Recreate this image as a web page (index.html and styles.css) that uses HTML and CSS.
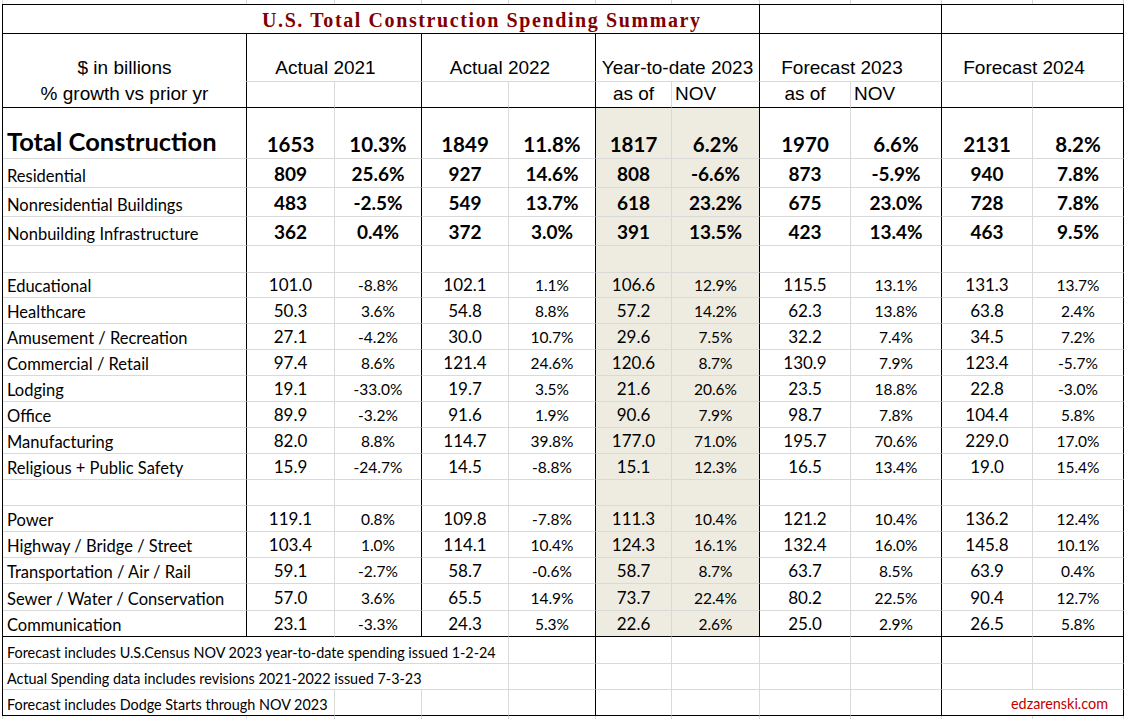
FILE: index.html
```html
<!DOCTYPE html>
<html lang="en">
<head>
<meta charset="utf-8">
<title>U.S. Total Construction Spending Summary</title>
<link rel="stylesheet" href="styles.css">
</head>
<body>
<div class="strip">
  <div></div><div></div><div></div><div></div><div></div><div></div><div></div><div></div><div></div><div></div><div></div>
</div>
<div class="sheet">
  <!-- title row -->
  <div class="c kr kb title s7">U.S. Total Construction Spending Summary</div>
  <div class="c kr kb s2"></div>
  <div class="c kr kb s2"></div>

  <!-- header row 1 -->
  <div class="c kr nb hd">$ in billions</div>
  <div class="c kr hd s2 off">Actual 2021</div>
  <div class="c kr hd s2 off">Actual 2022</div>
  <div class="c kr hd s2">Year-to-date 2023</div>
  <div class="c kr hd s2 off">Forecast 2023</div>
  <div class="c kr hd s2 off">Forecast 2024</div>

  <!-- header row 2 -->
  <div class="c kr kb hd">% growth vs prior yr</div>
  <div class="c kb"></div><div class="c kr kb"></div>
  <div class="c kb"></div><div class="c kr kb"></div>
  <div class="c kb hd">as of</div><div class="c kr kb hd left">NOV</div>
  <div class="c kb hd">as of</div><div class="c kr kb hd left">NOV</div>
  <div class="c kb"></div><div class="c kr kb"></div>

  <!-- Total -->
  <div class="c kr lab tl">Total Construction</div>
  <div class="c tn">1653</div><div class="c kr tn">10.3%</div>
  <div class="c tn">1849</div><div class="c kr tn">11.8%</div>
  <div class="c y tn">1817</div><div class="c kr y tn">6.2%</div>
  <div class="c tn">1970</div><div class="c kr tn">6.6%</div>
  <div class="c tn">2131</div><div class="c kr tn">8.2%</div>

  <div class="c kr lab">Residential</div>
  <div class="c bn">809</div><div class="c kr bn">25.6%</div>
  <div class="c bn">927</div><div class="c kr bn">14.6%</div>
  <div class="c y bn">808</div><div class="c kr y bn">-6.6%</div>
  <div class="c bn">873</div><div class="c kr bn">-5.9%</div>
  <div class="c bn">940</div><div class="c kr bn">7.8%</div>

  <div class="c kr lab">Nonresidential Buildings</div>
  <div class="c bn">483</div><div class="c kr bn">-2.5%</div>
  <div class="c bn">549</div><div class="c kr bn">13.7%</div>
  <div class="c y bn">618</div><div class="c kr y bn">23.2%</div>
  <div class="c bn">675</div><div class="c kr bn">23.0%</div>
  <div class="c bn">728</div><div class="c kr bn">7.8%</div>

  <div class="c kr lab">Nonbuilding Infrastructure</div>
  <div class="c bn">362</div><div class="c kr bn">0.4%</div>
  <div class="c bn">372</div><div class="c kr bn">3.0%</div>
  <div class="c y bn">391</div><div class="c kr y bn">13.5%</div>
  <div class="c bn">423</div><div class="c kr bn">13.4%</div>
  <div class="c bn">463</div><div class="c kr bn">9.5%</div>

  <div class="c kr"></div>
  <div class="c"></div><div class="c kr"></div>
  <div class="c"></div><div class="c kr"></div>
  <div class="c y"></div><div class="c kr y"></div>
  <div class="c"></div><div class="c kr"></div>
  <div class="c"></div><div class="c kr"></div>

  <div class="c kr lab">Educational</div>
  <div class="c n">101.0</div><div class="c kr p">-8.8%</div>
  <div class="c n">102.1</div><div class="c kr p">1.1%</div>
  <div class="c y n">106.6</div><div class="c kr y p">12.9%</div>
  <div class="c n">115.5</div><div class="c kr p">13.1%</div>
  <div class="c n">131.3</div><div class="c kr p">13.7%</div>

  <div class="c kr lab">Healthcare</div>
  <div class="c n">50.3</div><div class="c kr p">3.6%</div>
  <div class="c n">54.8</div><div class="c kr p">8.8%</div>
  <div class="c y n">57.2</div><div class="c kr y p">14.2%</div>
  <div class="c n">62.3</div><div class="c kr p">13.8%</div>
  <div class="c n">63.8</div><div class="c kr p">2.4%</div>

  <div class="c kr lab">Amusement / Recreation</div>
  <div class="c n">27.1</div><div class="c kr p">-4.2%</div>
  <div class="c n">30.0</div><div class="c kr p">10.7%</div>
  <div class="c y n">29.6</div><div class="c kr y p">7.5%</div>
  <div class="c n">32.2</div><div class="c kr p">7.4%</div>
  <div class="c n">34.5</div><div class="c kr p">7.2%</div>

  <div class="c kr lab">Commercial / Retail</div>
  <div class="c n">97.4</div><div class="c kr p">8.6%</div>
  <div class="c n">121.4</div><div class="c kr p">24.6%</div>
  <div class="c y n">120.6</div><div class="c kr y p">8.7%</div>
  <div class="c n">130.9</div><div class="c kr p">7.9%</div>
  <div class="c n">123.4</div><div class="c kr p">-5.7%</div>

  <div class="c kr lab">Lodging</div>
  <div class="c n">19.1</div><div class="c kr p">-33.0%</div>
  <div class="c n">19.7</div><div class="c kr p">3.5%</div>
  <div class="c y n">21.6</div><div class="c kr y p">20.6%</div>
  <div class="c n">23.5</div><div class="c kr p">18.8%</div>
  <div class="c n">22.8</div><div class="c kr p">-3.0%</div>

  <div class="c kr lab">Office</div>
  <div class="c n">89.9</div><div class="c kr p">-3.2%</div>
  <div class="c n">91.6</div><div class="c kr p">1.9%</div>
  <div class="c y n">90.6</div><div class="c kr y p">7.9%</div>
  <div class="c n">98.7</div><div class="c kr p">7.8%</div>
  <div class="c n">104.4</div><div class="c kr p">5.8%</div>

  <div class="c kr lab">Manufacturing</div>
  <div class="c n">82.0</div><div class="c kr p">8.8%</div>
  <div class="c n">114.7</div><div class="c kr p">39.8%</div>
  <div class="c y n">177.0</div><div class="c kr y p">71.0%</div>
  <div class="c n">195.7</div><div class="c kr p">70.6%</div>
  <div class="c n">229.0</div><div class="c kr p">17.0%</div>

  <div class="c kr lab">Religious + Public Safety</div>
  <div class="c n">15.9</div><div class="c kr p">-24.7%</div>
  <div class="c n">14.5</div><div class="c kr p">-8.8%</div>
  <div class="c y n">15.1</div><div class="c kr y p">12.3%</div>
  <div class="c n">16.5</div><div class="c kr p">13.4%</div>
  <div class="c n">19.0</div><div class="c kr p">15.4%</div>

  <div class="c kr"></div>
  <div class="c"></div><div class="c kr"></div>
  <div class="c"></div><div class="c kr"></div>
  <div class="c y"></div><div class="c kr y"></div>
  <div class="c"></div><div class="c kr"></div>
  <div class="c"></div><div class="c kr"></div>

  <div class="c kr lab">Power</div>
  <div class="c n">119.1</div><div class="c kr p">0.8%</div>
  <div class="c n">109.8</div><div class="c kr p">-7.8%</div>
  <div class="c y n">111.3</div><div class="c kr y p">10.4%</div>
  <div class="c n">121.2</div><div class="c kr p">10.4%</div>
  <div class="c n">136.2</div><div class="c kr p">12.4%</div>

  <div class="c kr lab">Highway / Bridge / Street</div>
  <div class="c n">103.4</div><div class="c kr p">1.0%</div>
  <div class="c n">114.1</div><div class="c kr p">10.4%</div>
  <div class="c y n">124.3</div><div class="c kr y p">16.1%</div>
  <div class="c n">132.4</div><div class="c kr p">16.0%</div>
  <div class="c n">145.8</div><div class="c kr p">10.1%</div>

  <div class="c kr lab">Transportation / Air / Rail</div>
  <div class="c n">59.1</div><div class="c kr p">-2.7%</div>
  <div class="c n">58.7</div><div class="c kr p">-0.6%</div>
  <div class="c y n">58.7</div><div class="c kr y p">8.7%</div>
  <div class="c n">63.7</div><div class="c kr p">8.5%</div>
  <div class="c n">63.9</div><div class="c kr p">0.4%</div>

  <div class="c kr lab">Sewer / Water / Conservation</div>
  <div class="c n">57.0</div><div class="c kr p">3.6%</div>
  <div class="c n">65.5</div><div class="c kr p">14.9%</div>
  <div class="c y n">73.7</div><div class="c kr y p">22.4%</div>
  <div class="c n">80.2</div><div class="c kr p">22.5%</div>
  <div class="c n">90.4</div><div class="c kr p">12.7%</div>

  <div class="c kr kb lab">Communication</div>
  <div class="c kb n">23.1</div><div class="c kr kb p">-3.3%</div>
  <div class="c kb n">24.3</div><div class="c kr kb p">5.3%</div>
  <div class="c kb y n">22.6</div><div class="c kr kb y p">2.6%</div>
  <div class="c kb n">25.0</div><div class="c kr kb p">2.9%</div>
  <div class="c kb n">26.5</div><div class="c kr kb p">5.8%</div>

  <!-- footnotes -->
  <div class="c lab fn s4">Forecast includes U.S.Census NOV 2023 year-to-date spending issued 1-2-24</div>
  <div class="c kr"></div>
  <div class="c"></div><div class="c"></div><div class="c"></div><div class="c kr"></div>
  <div class="c"></div><div class="c kr"></div>

  <div class="c lab fn s4">Actual Spending data includes revisions 2021-2022 issued 7-3-23</div>
  <div class="c kr"></div>
  <div class="c"></div><div class="c"></div><div class="c"></div><div class="c kr"></div>
  <div class="c"></div><div class="c kr"></div>

  <div class="c kb lab fn s2">Forecast includes Dodge Starts through NOV 2023</div>
  <div class="c kb"></div><div class="c kb"></div><div class="c kr kb"></div>
  <div class="c kb"></div><div class="c kb"></div><div class="c kb"></div><div class="c kr kb"></div>
  <div class="c kr kb s2 site">edzarenski.com</div>
</div>
<div class="strip">
  <div></div><div></div><div></div><div></div><div></div><div></div><div></div><div></div><div></div><div></div><div></div>
</div>
</body>
</html>
```

FILE: styles.css
```css
:root {
  --grid: #d9d9d9;
  --ink: #000000;
  --ytd: #eeece1;
  --cols: 244px 88px 87px 87px 87px 76px 88px 91px 91px 91px 91px;
}

html, body {
  margin: 0;
  padding: 0;
  background: #ffffff;
}

body {
  width: 1124px;
  height: 719px;
  overflow: hidden;
  font-family: Lato, "Noto Sans", sans-serif;
  color: var(--ink);
}

.strip {
  display: grid;
  grid-template-columns: var(--cols);
  height: 4px;
  margin-left: 2px;
  border-left: 1px solid var(--grid);
}

.strip div {
  border-right: 1px solid var(--grid);
}

.sheet {
  display: grid;
  grid-template-columns: var(--cols);
  grid-template-rows: 29px 48px 26px 51px 29px 29px 29px 27px 25px 26px 26px 26px 26px 26px 26px 26px 26px 26px 26px 26px 27px 26px 27px 26px 26px;
  margin-left: 2px;
  border-left: 1px solid #000;
  border-top: 1px solid #000;
  width: max-content;
}

.c {
  box-sizing: border-box;
  border-right: 1px solid var(--grid);
  border-bottom: 1px solid var(--grid);
  display: flex;
  align-items: flex-end;
  justify-content: center;
  padding-bottom: 2px;
  white-space: nowrap;
  min-width: 0;
  background: #fff;
}

.kr { border-right-color: #000; }
.kb { border-bottom-color: #000; }
.nb { border-bottom-color: transparent; }
.y { background: var(--ytd); }

.s2 { grid-column: span 2; }
.s4 { grid-column: span 4; }
.s7 { grid-column: span 7; }

.title {
  justify-content: flex-start;
  padding-left: 259px;
  padding-bottom: 1px;
  font-family: "Liberation Serif", "Times New Roman", serif;
  font-weight: bold;
  font-size: 20px;
  letter-spacing: 1.6px;
  color: #800000;
}

.hd {
  font-family: "Liberation Sans", Arial, sans-serif;
  font-size: 19px;
}

.off { padding-right: 17px; }
.left { justify-content: flex-start; padding-left: 3px; }

.lab {
  justify-content: flex-start;
  padding-left: 4px;
  padding-bottom: 1px;
  font-size: 16.5px;
}

.tl {
  font-size: 25.5px;
  font-weight: bold;
  padding-bottom: 2px;
}

.tn {
  font-size: 20.5px;
  font-weight: bold;
}

.bn {
  font-size: 19px;
  font-weight: bold;
}

.n { font-size: 17px; }
.p { font-size: 15.5px; padding-bottom: 3px; }

.fn {
  font-size: 14.4px;
  padding-bottom: 2px;
  overflow: visible;
}

.site {
  justify-content: flex-end;
  padding-right: 15px;
  padding-bottom: 3px;
  font-size: 14.4px;
  color: #c00000;
}
```
